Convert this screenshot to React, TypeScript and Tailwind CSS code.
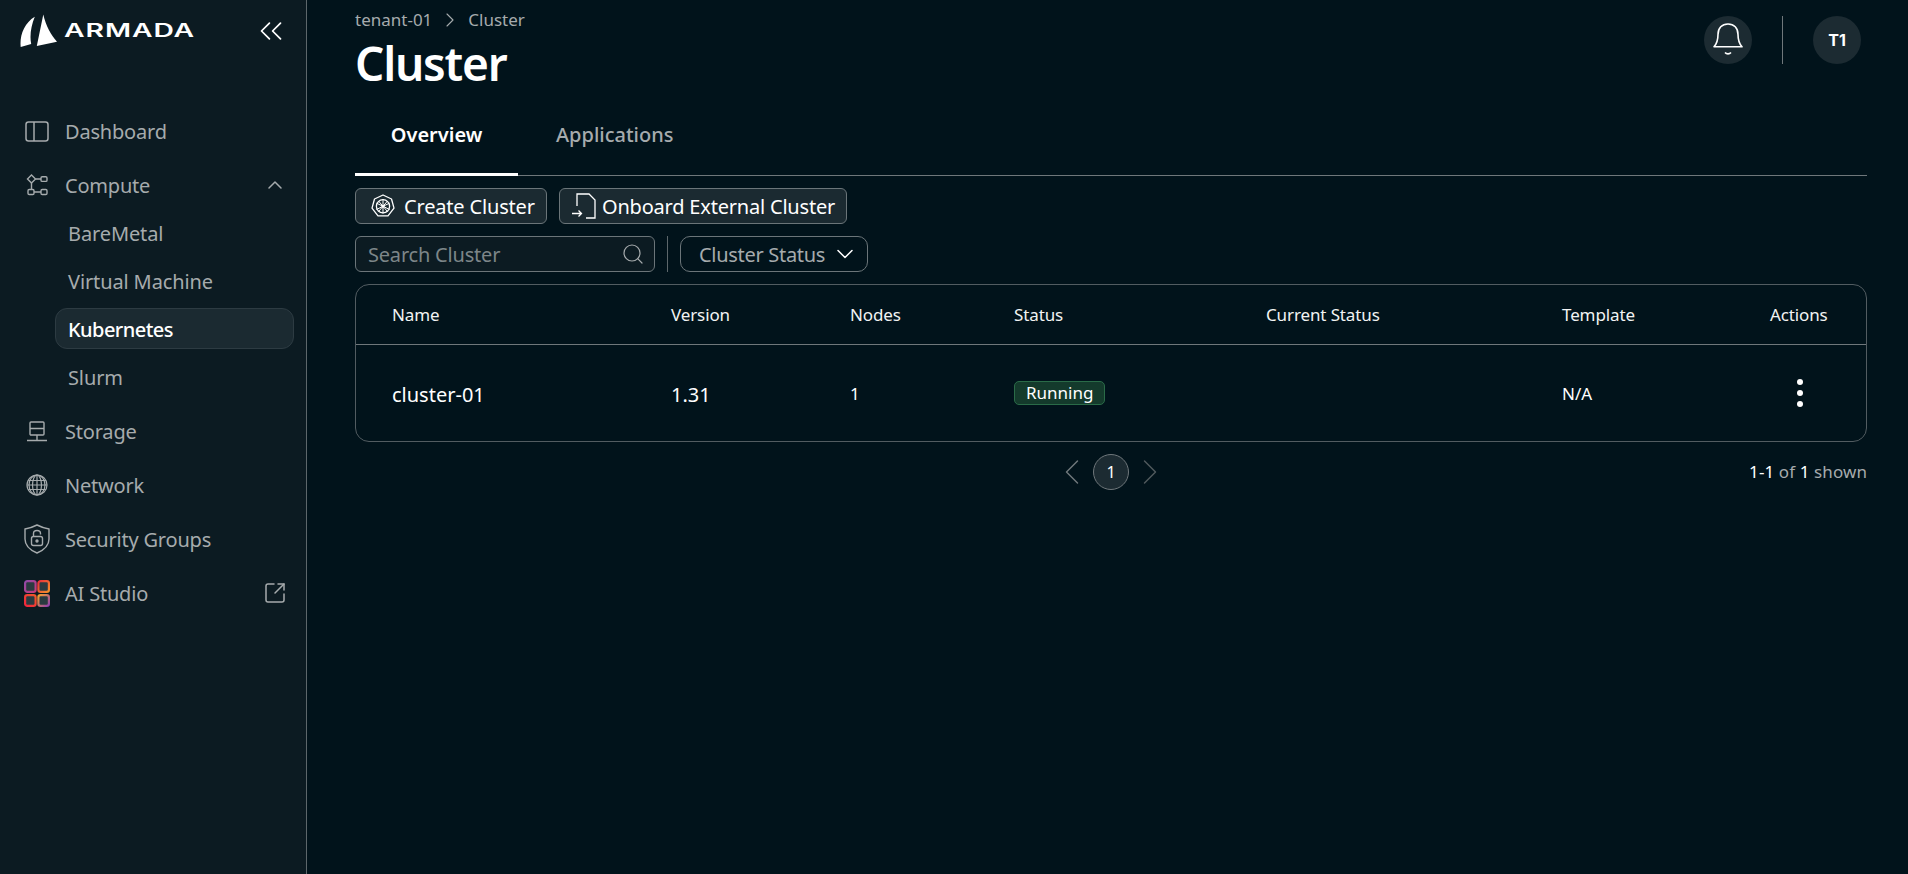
import { ChevronDown, ChevronLeft, ChevronRight, ChevronUp, ChevronsLeft, Search, SquareArrowOutUpRight } from "lucide-react";
import type { ReactNode } from "react";

function Logo() {
  return (
    <div className="flex items-start gap-[6px]">
      <svg width="38" height="34" viewBox="0 0 38 34" fill="#fff">
        <path d="M0.700 33C-0.500 22 4 9 14.800 2.700C11 12 9.500 22 11.200 30Z" />
        <path d="M23.300 0.500C26 12 31 21 37 27.700L16.800 32L23.300 0.500Z" />
      </svg>
      <span className="mt-[6px] inline-block origin-left scale-x-[1.57] font-['Inter',sans-serif] text-[18px] leading-[21px] font-semibold tracking-[0.6px] text-white">
        ARMADA
      </span>
    </div>
  );
}

function DashboardIcon() {
  return (
    <svg width="24" height="21" viewBox="0 0 24 21" fill="none" stroke="currentColor" strokeWidth="1.5">
      <rect x="1" y="1" width="22" height="19" rx="2.5" />
      <path d="M9 1v19" />
    </svg>
  );
}

function ComputeIcon() {
  return (
    <svg width="22" height="22" viewBox="0 0 22 22" fill="none" stroke="currentColor" strokeWidth="1.4">
      <path d="M5.500 1 9.500 5 5.500 9 1.500 5Z" />
      <rect x="15" y="2.800" width="6" height="4.600" rx="1.200" />
      <rect x="2" y="15.500" width="6" height="5" rx="1.200" />
      <rect x="15" y="15.500" width="6" height="5" rx="1.200" />
      <path d="M9.500 5H15M8 18h7M5.500 9v6.500" />
    </svg>
  );
}

function StorageIcon() {
  return (
    <svg width="20" height="21" viewBox="0 0 20 21" fill="none" stroke="currentColor" strokeWidth="1.4">
      <rect x="3" y="1" width="14" height="13" rx="1" />
      <path d="M3 7.500h14M10 14v5M0 19.500h20" />
    </svg>
  );
}

function NetworkIcon() {
  return (
    <svg width="22" height="22" viewBox="0 0 22 22" fill="none" stroke="currentColor" strokeWidth="1.200">
      <circle cx="11" cy="11" r="10" />
      <ellipse cx="11" cy="11" rx="4.500" ry="10" />
      <ellipse cx="11" cy="11" rx="8" ry="10" />
      <path d="M11 1v20M1 11h20M2.200 6.500h17.600M2.200 15.500h17.600" />
    </svg>
  );
}

function ShieldIcon() {
  return (
    <svg width="26" height="30" viewBox="0 0 26 30" fill="none" stroke="currentColor" strokeWidth="1.400">
      <path d="M1 5C5 4.500 9 3 13 1C17 3 21 4.500 25 5V15C25 22 19 26.500 13 29C7 26.500 1 22 1 15Z" />
      <rect x="7.500" y="12.500" width="11" height="9" rx="2" />
      <path d="M9.500 12.500V9.500C9.500 5.500 16.500 5.500 16.500 9.500V10.500" />
      <circle cx="13" cy="17" r="1" fill="currentColor" />
    </svg>
  );
}

function StudioIcon() {
  return (
    <svg width="26" height="27" viewBox="0 0 26 27" fill="#2a3a40" strokeWidth="2.200">
      <defs>
        <linearGradient id="studioA" x1="0" y1="0" x2="1" y2="1">
          <stop offset="0" stopColor="#8f4aa8" />
          <stop offset="1" stopColor="#c83a78" />
        </linearGradient>
        <linearGradient id="studioB" x1="0" y1="0" x2="1" y2="1">
          <stop offset="0" stopColor="#e8303a" />
          <stop offset="1" stopColor="#f5902a" />
        </linearGradient>
        <linearGradient id="studioC" x1="0" y1="1" x2="1" y2="0">
          <stop offset="0" stopColor="#f0243c" />
          <stop offset="1" stopColor="#f0582a" />
        </linearGradient>
        <linearGradient id="studioD" x1="0" y1="0" x2="1" y2="1">
          <stop offset="0" stopColor="#f7a02c" />
          <stop offset="1" stopColor="#8f3fb0" />
        </linearGradient>
      </defs>
      <rect x="1.100" y="1.100" width="10.500" height="10.800" rx="2.200" stroke="url(#studioA)" />
      <rect x="14.400" y="1.100" width="10.500" height="10.800" rx="2.200" stroke="url(#studioB)" />
      <rect x="1.100" y="15.100" width="10.500" height="10.800" rx="2.200" stroke="url(#studioC)" />
      <rect x="14.400" y="15.100" width="10.500" height="10.800" rx="2.200" stroke="url(#studioD)" />
    </svg>
  );
}

function HelmIcon() {
  return (
    <svg width="24" height="24" viewBox="0 0 24 24" fill="none" stroke="#fff">
      <path d="M12 1 20.500 5 23 14.200 17 21.800H7L1 14.200 3.500 5Z" strokeWidth="1.300" strokeLinejoin="round" />
      <circle cx="12" cy="12.300" r="6.600" strokeWidth="1.300" />
      <path d="M12 5V19.600M5.400 9.100 18.600 15.500M18.600 9.100 5.400 15.500M7.500 7 16.500 17.600M16.500 7 7.500 17.600" strokeWidth="1" />
      <circle cx="12" cy="12.300" r="1.500" fill="#fff" stroke="none" />
    </svg>
  );
}

function OnboardIcon() {
  return (
    <svg width="24" height="26" viewBox="0 0 24 26" fill="none" stroke="#fff" strokeWidth="1.300">
      <path d="M5 13V1H17L23 7V25H14" />
      <path d="M0 20.500H9.500M6.500 17.500 9.500 20.500 6.500 23.500" />
    </svg>
  );
}

function BellIcon() {
  return (
    <svg width="30" height="34" viewBox="0 0 30 34" fill="none" stroke="#fff" strokeWidth="1.600">
      <path d="M1 23.800C4 20.500 5 16.500 5 11.500C5 5 9 1 15 1C21 1 25 5 25 11.500C25 16.500 26 20.500 29 23.800Z" strokeLinejoin="round" />
      <path d="M12 29.500C13.500 31.300 16.500 31.300 18 29.500" />
    </svg>
  );
}

function NavItem({ icon, label, right }: { icon: ReactNode; label: string; right?: ReactNode }) {
  return (
    <div className="flex h-[54px] items-center pl-[20px] text-[#a6abad]">
      <span className="flex w-[33px] justify-center">{icon}</span>
      <span className="ml-[12px] pt-[2px] text-[20px] tracking-[-0.2px]">{label}</span>
      {right}
    </div>
  );
}

function SubItem({ label, active }: { label: string; active?: boolean }) {
  return (
    <div
      className={`ml-[55px] mr-[12px] flex h-[41px] items-center rounded-[12px] border px-[12px] pt-[2px] text-[20px] ${
        active
          ? "border-[#2d3b42] bg-[#1b2a31] font-medium tracking-[-0.55px] text-white"
          : "border-transparent tracking-[-0.12px] text-[#a6abad]"
      }`}
    >
      {label}
    </div>
  );
}

function Sidebar() {
  return (
    <aside className="w-[307px] shrink-0 border-r border-[#5d676b] bg-[#0c1b22]">
      <div className="flex h-[104px] items-start justify-between pt-[14px] pl-[20px] pr-[16px]">
        <Logo />
        <ChevronsLeft size={38} strokeWidth={1.1} className="mt-[-2px] text-white" />
      </div>
      <NavItem icon={<DashboardIcon />} label="Dashboard" />
      <NavItem
        icon={<ComputeIcon />}
        label="Compute"
        right={<ChevronUp size={24} strokeWidth={1.5} className="ml-auto mr-[19px]" />}
      />
      <div className="flex flex-col gap-[7px] pb-[7px]">
        <SubItem label="BareMetal" />
        <SubItem label="Virtual Machine" />
        <SubItem label="Kubernetes" active />
        <SubItem label="Slurm" />
      </div>
      <NavItem icon={<StorageIcon />} label="Storage" />
      <NavItem icon={<NetworkIcon />} label="Network" />
      <NavItem icon={<ShieldIcon />} label="Security Groups" />
      <NavItem
        icon={<StudioIcon />}
        label="AI Studio"
        right={<SquareArrowOutUpRight size={24} strokeWidth={1.5} className="ml-auto mr-[19px]" />}
      />
    </aside>
  );
}

function ClusterTable() {
  const cols = "grid grid-cols-[279px_179px_164px_252px_296px_208px_1fr] items-center pl-[36px] pr-[37px]";
  return (
    <div className="mt-[12px] rounded-[14px] border border-[#525c61]">
      <div className={`${cols} h-[60px] border-b border-[#6f777b] pt-[1px] text-[17px] tracking-[-0.12px] text-[#f2f3f3]`}>
        <span>Name</span>
        <span>Version</span>
        <span>Nodes</span>
        <span>Status</span>
        <span>Current Status</span>
        <span>Template</span>
        <span>Actions</span>
      </div>
      <div className={`${cols} h-[96px] text-white`}>
        <span className="pt-[3px] text-[20px]">cluster-01</span>
        <span className="pt-[3px] text-[20px]">1.31</span>
        <span className="pt-[1px] text-[17px]">1</span>
        <span>
          <span className="inline-flex h-[24px] items-center rounded-[5px] border border-[#2a6b48] bg-[#143a2c] px-[11px] text-[17px]">
            Running
          </span>
        </span>
        <span />
        <span className="pt-[1px] text-[17px]">N/A</span>
        <span className="flex w-[60px] flex-col items-center gap-[5px]">
          <i className="size-[6px] rounded-full bg-white" />
          <i className="size-[6px] rounded-full bg-white" />
          <i className="size-[6px] rounded-full bg-white" />
        </span>
      </div>
    </div>
  );
}

export default function App() {
  return (
    <div className="flex h-[874px] w-full overflow-hidden bg-[#01131b] font-['Noto_Sans',sans-serif]">
      <Sidebar />
      <main className="min-w-0 flex-1 pl-[48px] pr-[41px]">
        <header className="flex h-[158px] items-start justify-between">
          <div>
            <div className="flex h-[40px] items-center pb-[1px] text-[17px] text-[#a6abad]">
              tenant-01
              <ChevronRight size={24} strokeWidth={1.1} className="mx-[6px]" />
              Cluster
            </div>
            <h1 className="mt-[-4px] text-[46px] leading-[54px] font-semibold tracking-[-1.2px] text-white">Cluster</h1>
          </div>
          <div className="flex items-center pr-[6px] pt-[16px]">
            <span className="flex size-[48px] items-center justify-center rounded-full bg-[#1c2b32]">
              <BellIcon />
            </span>
            <span className="mx-[30px] h-[48px] w-px bg-[#6f777b]" />
            <span className="flex size-[48px] items-center justify-center rounded-full bg-[#1c2b32] font-['Inter',sans-serif] text-[16px] font-bold text-white">
              T1
            </span>
          </div>
        </header>

        <div className="mt-[-50px] flex h-[68px] border-b border-[#6f777b]">
          <div className="-mb-px flex w-[163px] justify-center border-b-[3px] border-white pt-[12px] text-[20px] font-semibold text-white">
            Overview
          </div>
          <div className="ml-[38px] pt-[12px] text-[20px] font-medium text-[#a6abad]">Applications</div>
        </div>

        <div className="mt-[12px] flex gap-[12px]">
          <button className="flex h-[36px] w-[192px] items-center gap-[9px] rounded-[6px] border border-[#6b7579] bg-[#1b2a31] pl-[15px] text-[20px] tracking-[-0.17px] text-white">
            <HelmIcon />
            <span className="pt-[2px]">Create Cluster</span>
          </button>
          <button className="flex h-[36px] w-[288px] items-center gap-[6px] rounded-[6px] border border-[#6b7579] bg-[#1b2a31] pl-[12px] text-[20px] tracking-[-0.2px] text-white">
            <OnboardIcon />
            <span className="pt-[2px]">Onboard External Cluster</span>
          </button>
        </div>

        <div className="mt-[12px] flex h-[36px] items-center">
          <div className="flex h-full w-[300px] items-center justify-between rounded-[6px] border border-[#6b7579] bg-[#0c1b22] pl-[12px] pr-[9px] text-[20px] tracking-[-0.2px] text-[#7d8689]">
            <span className="pt-[2px]">Search Cluster</span>
            <Search size={24} strokeWidth={1.2} className="text-[#a6abad]" />
          </div>
          <span className="mx-[12px] h-full w-px bg-[#5d676b]" />
          <div className="flex h-full w-[188px] items-center gap-[6px] rounded-[10px] border border-[#6b7579] pl-[18px] text-[20px] tracking-[-0.3px] text-[#a6abad]">
            <span className="pt-[2px]">Cluster Status</span>
            <ChevronDown size={28} strokeWidth={1.3} className="text-white" />
          </div>
        </div>

        <ClusterTable />

        <div className="mt-[12px] grid h-[36px] grid-cols-3 items-center">
          <span />
          <div className="flex h-[36px] items-center justify-center text-[#6f777b]">
            <ChevronLeft size={44} strokeWidth={0.8} className="-mr-px" />
            <span className="flex size-[36px] items-center justify-center rounded-full border border-[#6f777b] bg-[#1c2b32] text-[16px] text-white">
              1
            </span>
            <ChevronRight size={44} strokeWidth={0.8} className="-ml-px text-[#50595d]" />
          </div>
          <div className="text-right text-[17px] tracking-[0.1px] text-[#a6abad]">
            <span className="text-white">1-1</span> of <span className="text-white">1</span> shown
          </div>
        </div>
      </main>
    </div>
  );
}
